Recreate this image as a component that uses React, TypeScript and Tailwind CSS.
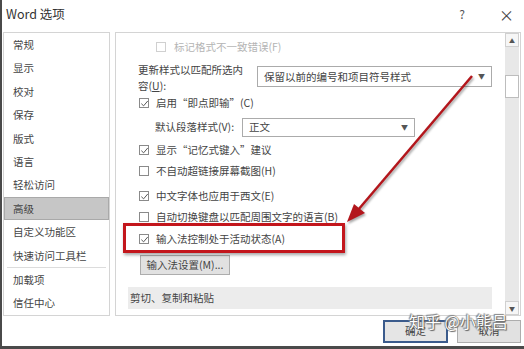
import React from 'react';

const FONT = { fontFamily: '"Noto Sans CJK SC", "Noto Sans", sans-serif' };

function Check({ checked, disabled }: { checked?: boolean; disabled?: boolean }) {
  return (
    <span
      className={`grid h-[10px] w-[10px] shrink-0 place-items-center border bg-white ${
        disabled ? 'border-[#d0d0d0] bg-[#f4f4f4]' : 'border-[#8a8a8a]'
      }`}
    >
      {checked && (
        <svg viewBox="0 0 10 10" className="h-[9px] w-[9px]">
          <path d="M1.5 5.2 L4 7.6 L8.6 2.2" fill="none" stroke="#555" strokeWidth="1.1" />
        </svg>
      )}
    </span>
  );
}

function CheckRow({ h, label, checked }: { h: string; label: string; checked?: boolean }) {
  return (
    <div className={`flex items-center gap-[7px] pl-[23px] ${h}`}>
      <Check checked={checked} />
      <span>{label}</span>
    </div>
  );
}

function Dropdown({ w, h, mt, text }: { w: string; h: string; mt?: string; text: string }) {
  return (
    <div className={`flex items-center justify-between border border-[#ababab] bg-white pl-[6px] pr-[6px] ${w} ${h} ${mt ?? ''}`}>
      <span>{text}</span>
      <span className="text-[7px] text-[#555]">▼</span>
    </div>
  );
}

const NAV = ['常规', '显示', '校对', '保存', '版式', '语言', '轻松访问', '高级', '自定义功能区', '快速访问工具栏'];

export default function App() {
  return (
    <div
      className="relative flex h-[349px] w-[524px] flex-col overflow-hidden border-b-[3px] border-l-2 border-[#4a4a4a] bg-white text-[10.5px] text-[#444]"
      style={FONT}
    >
      {/* Title bar */}
      <div className="flex h-[32px] shrink-0 items-center pb-[4px] pl-[4px]">
        <span className="text-[12.5px] text-[#333]">Word 选项</span>
        <span className="ml-auto mr-[34px] text-[12px] text-[#555]">?</span>
        <span className="mr-[10px] text-[15px] leading-none text-[#444]">×</span>
      </div>

      {/* Body */}
      <div className="flex h-[284px] shrink-0">
        {/* Left nav */}
        <div className="ml-[1px] flex w-[107px] flex-col border border-[#d4d4d4]">
          {NAV.map((n) =>
            n === '高级' ? (
              <div key={n} className="flex h-[23.5px] items-center border border-[#a9a9a9] bg-[#c6c6c6] pl-[8px]">
                {n}
              </div>
            ) : (
              <div key={n} className="flex h-[23.5px] items-center pl-[9px]">
                {n}
              </div>
            ),
          )}
          <div className="mx-[3px] h-px bg-[#dcdcdc]" />
          <div className="flex h-[23.5px] items-center pl-[9px]">加载项</div>
          <div className="flex h-[23.5px] items-center pl-[9px]">信任中心</div>
        </div>

        {/* Main panel */}
        <div className="ml-[5px] flex w-[406px] border border-[#d4d4d4]">
          <div className="flex flex-1 flex-col">
            <div className="mt-[4px] flex h-[20px] items-center gap-[8px] pl-[40px] text-[#b4b4b4]">
              <Check disabled />
              <span>标记格式不一致错误(F)</span>
            </div>

            <div className="flex h-[37px] items-start">
              <div className="mt-[5px] w-[141px] pl-[22px] leading-[16px]">
                更新样式以匹配所选内
                <br />
                容(<span className="underline">U</span>):
              </div>
              <Dropdown w="w-[235px]" h="h-[21px]" mt="mt-[9px]" text="保留以前的编号和项目符号样式" />
            </div>

            <CheckRow h="h-[18px]" label="启用“即点即输”(C)" checked />

            <div className="flex h-[30px] items-center">
              <span className="w-[126px] pl-[39px]">默认段落样式(V):</span>
              <Dropdown w="w-[173px]" h="h-[19px]" text="正文" />
            </div>

            <CheckRow h="h-[16px]" label="显示“记忆式键入”建议" checked />
            <CheckRow h="h-[26px]" label="不自动超链接屏幕截图(H)" />
            <CheckRow h="h-[24px]" label="中文字体也应用于西文(E)" checked />
            <CheckRow h="h-[18px]" label="自动切换键盘以匹配周围文字的语言(B)" />

            <div className="relative">
              <CheckRow h="h-[26px]" label="输入法控制处于活动状态(A)" checked />
              <div className="absolute left-[7px] top-[-3px] h-[30px] w-[222px] border-[3px] border-[#c3161c] shadow-[1px_2px_3px_rgba(0,0,0,0.35)]" />
            </div>

            <div className="ml-[24px] mt-[3px] flex h-[20px] w-[90px] items-center justify-center border border-[#adadad] bg-[#e1e1e1]">
              输入法设置(M)...
            </div>

            <div className="ml-[12px] mt-[12px] flex h-[22px] w-[364px] items-center bg-[#ececec] pl-[2px] text-[#444]">
              剪切、复制和粘贴
            </div>
          </div>

          {/* Scrollbar */}
          <div className="mr-[1px] flex w-[14px] flex-col bg-[#e8e8e8]">
            <div className="flex h-[14px] items-center justify-center border border-[#d0d0d0] bg-[#f6f6f6] text-[6px] text-[#555]">▲</div>
            <div className="mt-[28px] h-[23px] border border-[#bdbdbd] bg-white" />
            <div className="flex-1" />
            <div className="flex h-[14px] items-center justify-center border border-[#d0d0d0] bg-[#f6f6f6] text-[6px] text-[#555]">▼</div>
          </div>
        </div>
      </div>

      {/* Bottom buttons */}
      <div className="flex h-[30px] shrink-0 items-center justify-end gap-[9px] pr-[3px]">
        <div className="flex h-[23px] w-[65px] items-center justify-center border-2 border-[#3b5b8c] bg-[#e5e5e5]">确定</div>
        <div className="flex h-[23px] w-[64px] items-center justify-center border border-[#adadad] bg-[#e1e1e1]">取消</div>
      </div>

      {/* Watermark */}
      <div className="absolute left-[407px] top-[313px] text-[16px] leading-none text-white [text-shadow:0_0_1px_#444,1px_1px_1px_#666,-1px_-1px_1px_#888]">
        知乎 @小熊吕
      </div>

      {/* Annotation arrow */}
      <svg className="pointer-events-none absolute left-0 top-0 drop-shadow-[1px_2px_1px_rgba(0,0,0,0.35)]" width="524" height="349">
        <line x1="470" y1="76" x2="356" y2="210" stroke="#b3161c" strokeWidth="2.5" />
        <polygon points="345,222 363,213 352,204" fill="#b3161c" />
      </svg>
    </div>
  );
}
